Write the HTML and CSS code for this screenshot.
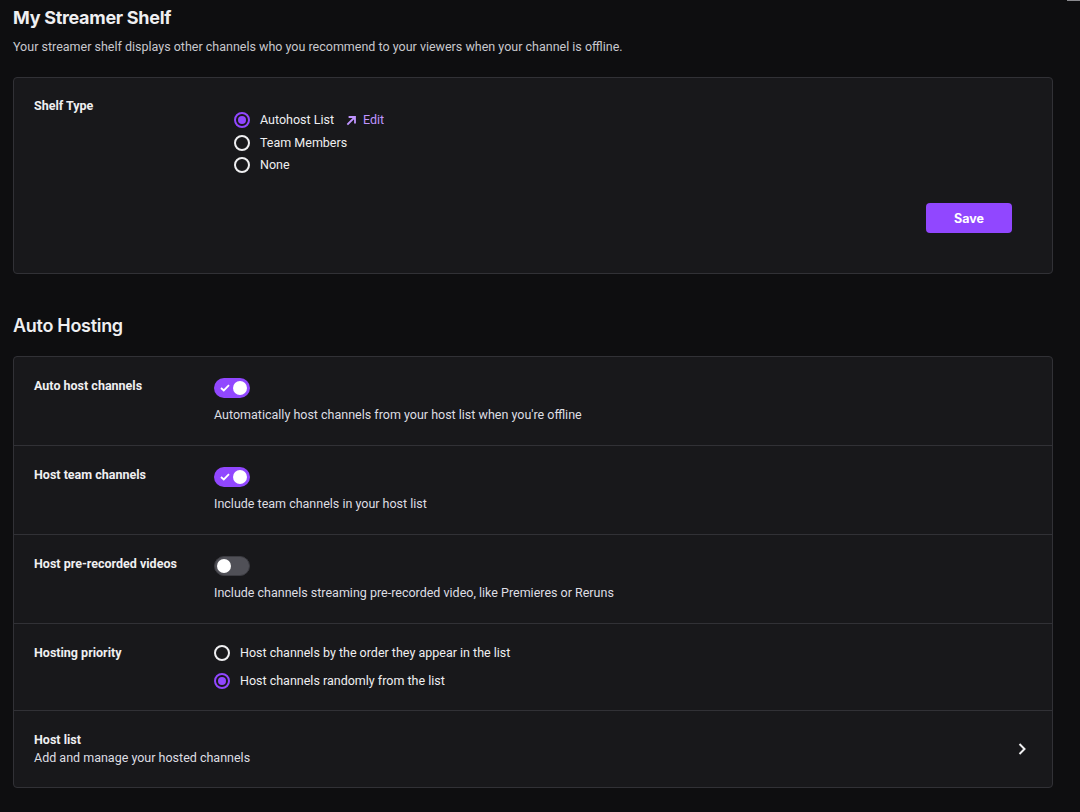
FILE: index.html
```html
<!DOCTYPE html>
<html>
<head>
<meta charset="utf-8">
<link rel="stylesheet" href="styles.css">
</head>
<body>
<div class="scroll-thumb"></div>
<main class="page">
  <h2 class="section-title">My Streamer Shelf</h2>
  <p class="section-sub">Your streamer shelf displays other channels who you recommend to your viewers when your channel is offline.</p>

  <section class="card shelf">
    <div class="shelf-grid">
      <div class="label">Shelf Type</div>
      <div class="shelf-content">
        <div class="radio-list tight">
          <label class="radio checked"><span class="dot"></span><span>Autohost List</span>
            <a class="edit"><svg width="11" height="11" viewBox="0 0 11 11"><path d="M2 9 L8.5 2.5 M3.5 2 H9 V7.5" fill="none" stroke="currentColor" stroke-width="1.8" stroke-linecap="square"/></svg>Edit</a>
          </label>
          <label class="radio"><span class="dot"></span><span>Team Members</span></label>
          <label class="radio"><span class="dot"></span><span>None</span></label>
        </div>
        <div class="actions"><button class="btn-primary">Save</button></div>
      </div>
    </div>
  </section>

  <h2 class="section-title second">Auto Hosting</h2>

  <section class="card list">
    <div class="row">
      <div class="label">Auto host channels</div>
      <div class="content">
        <span class="toggle on"><svg class="check" width="10" height="8" viewBox="0 0 10 8"><path d="M1 4 L3.8 6.5 L9 1.2" fill="none" stroke="#fff" stroke-width="1.8"/></svg><span class="knob"></span></span>
        <div class="desc">Automatically host channels from your host list when you're offline</div>
      </div>
    </div>
    <div class="row">
      <div class="label">Host team channels</div>
      <div class="content">
        <span class="toggle on"><svg class="check" width="10" height="8" viewBox="0 0 10 8"><path d="M1 4 L3.8 6.5 L9 1.2" fill="none" stroke="#fff" stroke-width="1.8"/></svg><span class="knob"></span></span>
        <div class="desc">Include team channels in your host list</div>
      </div>
    </div>
    <div class="row">
      <div class="label">Host pre-recorded videos</div>
      <div class="content">
        <span class="toggle off"><span class="knob"></span></span>
        <div class="desc">Include channels streaming pre-recorded video, like Premieres or Reruns</div>
      </div>
    </div>
    <div class="row priority-row">
      <div class="label">Hosting priority</div>
      <div class="content">
        <div class="radio-list loose">
          <label class="radio"><span class="dot"></span><span>Host channels by the order they appear in the list</span></label>
          <label class="radio checked"><span class="dot"></span><span>Host channels randomly from the list</span></label>
        </div>
      </div>
    </div>
    <div class="row link-row">
      <div class="link-text">
        <div class="label">Host list</div>
        <div class="sub">Add and manage your hosted channels</div>
      </div>
      <svg class="chevron" width="10" height="14" viewBox="0 0 10 14"><path d="M2.5 2 L7.5 7 L2.5 12" fill="none" stroke="#efeff1" stroke-width="2"/></svg>
    </div>
  </section>
</main>
</body>
</html>
```

FILE: styles.css
```css
* { box-sizing: border-box; }
html, body { margin: 0; padding: 0; }
body {
  background: #0e0e10;
  color: #efeff1;
  font-family: Roboto, Inter, "Noto Sans", sans-serif;
  font-size: 12.5px;
  line-height: 18px;
  height: 812px;
  overflow: hidden;
  position: relative;
}
.scroll-thumb {
  position: absolute;
  top: 0;
  right: 0;
  width: 13px;
  height: 1px;
  background: #8a8a8f;
}
.page {
  padding: 7px 27px 0 13px;
}
.section-title {
  margin: 0;
  font-family: Inter, Roboto, sans-serif;
  font-size: 18px;
  line-height: 22px;
  font-weight: 700;
  letter-spacing: -0.3px;
}
.section-title.second {
  margin-top: 41px;
  font-weight: 600;
}
.section-sub {
  margin: 9px 0 0;
  color: #c8c8cd;
  font-size: 12.5px;
}
.card {
  background: #18181b;
  border: 1px solid #313136;
  border-radius: 4px;
}
.shelf {
  margin-top: 21px;
  padding: 19px 20px 40px 20px;
}
.list { margin-top: 19px; }
.shelf-grid {
  display: grid;
  grid-template-columns: 200px 1fr;
}
.label {
  font-weight: 700;
  font-size: 12.5px;
}
.shelf-content { padding-top: 14px; }
.radio-list { display: flex; flex-direction: column; }
.radio-list.tight { gap: 4.5px; }
.radio-list.loose { gap: 10px; }
.radio {
  display: flex;
  align-items: center;
  height: 18px;
  gap: 10px;
  color: #efeff1;
  font-size: 12.5px;
}
.dot {
  width: 16px;
  height: 16px;
  border-radius: 50%;
  border: 2px solid #efeff1;
  flex: none;
  position: relative;
}
.radio.checked .dot {
  border-color: #9147ff;
}
.radio.checked .dot::after {
  content: "";
  position: absolute;
  left: 2px; top: 2px;
  width: 8px; height: 8px;
  border-radius: 50%;
  background: #9147ff;
}
.edit {
  display: inline-flex;
  align-items: center;
  gap: 6px;
  margin-left: 2px;
  color: #bf94ff;
}
.actions {
  display: flex;
  justify-content: flex-end;
  margin-top: 29px;
  padding-right: 20px;
}
.btn-primary {
  width: 86px;
  height: 30px;
  border: none;
  border-radius: 4px;
  background: #9147ff;
  color: #fff;
  font-family: Inter, Roboto, sans-serif;
  font-weight: 700;
  font-size: 12.5px;
}
.row {
  display: grid;
  grid-template-columns: 180px 1fr;
  padding: 20px 20px 21px;
  border-bottom: 1px solid #313136;
}
.row.priority-row { padding-bottom: 20px; }
.row:last-child { border-bottom: none; padding-bottom: 20px; }
.toggle {
  display: block;
  position: relative;
  width: 36px;
  height: 20px;
  border-radius: 10px;
  margin-top: 1px;
}
.toggle.on { background: #9147ff; }
.toggle.off { background: #505057; border: 1px solid #3c3c42; }
.toggle .knob {
  position: absolute;
  top: 3px;
  width: 14px;
  height: 14px;
  border-radius: 50%;
  background: #fff;
}
.toggle.on .knob { right: 3px; }
.toggle.off .knob { left: 2px; top: 2px; }
.toggle .check {
  position: absolute;
  left: 6px;
  top: 6px;
}
.desc {
  margin-top: 8px;
  color: #dedee3;
  font-size: 12.5px;
}
.link-row {
  display: flex;
  align-items: center;
  justify-content: space-between;
  padding-right: 25px;
}
.link-text .sub {
  color: #dedee3;
  font-size: 12.5px;
}
```
